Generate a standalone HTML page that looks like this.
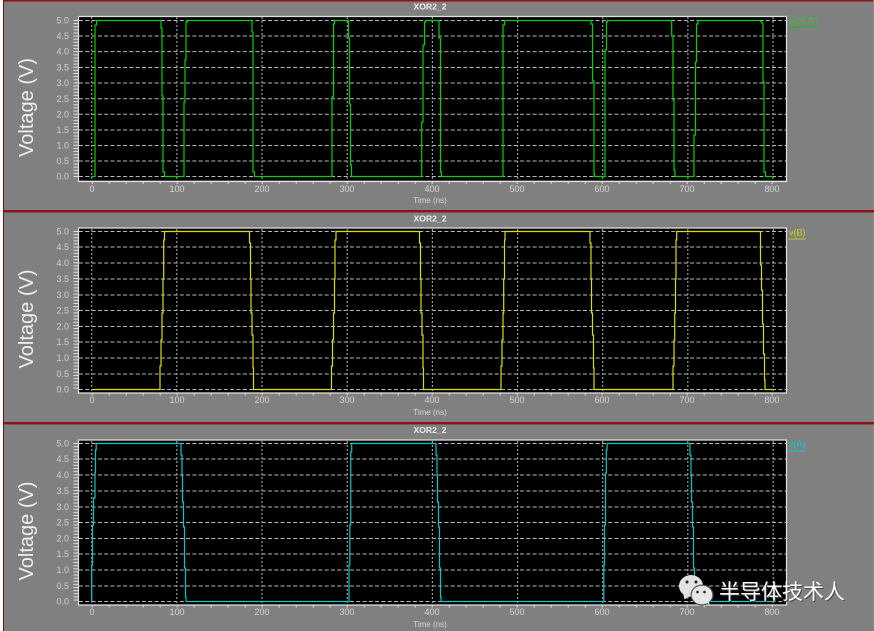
<!DOCTYPE html>
<html>
<head>
<meta charset="utf-8">
<style>
html,body{margin:0;padding:0;width:874px;height:631px;overflow:hidden;background:#808080}
svg{display:block}
text{font-family:"Liberation Sans",sans-serif}
.n{font-size:9px;fill:#d0d0d0}
.nm{font-size:9px;fill:#d4d4d4;text-anchor:middle}
.t{font-size:8.6px;font-weight:bold;fill:#eee;text-anchor:middle}
.x{font-size:8px;fill:#d8d8d8;text-anchor:middle}
.v{font-size:20px;fill:#f0f0f0;text-anchor:middle}
.g{stroke:#b8b8b8;stroke-width:1;fill:none;stroke-dasharray:4 2.3}
.d{stroke:#9a9a9a;stroke-width:1.2;fill:none;stroke-dasharray:2 2}
.w{fill:none;stroke-width:1.2;stroke-linejoin:miter}
.tk{stroke:#e0e0e0;fill:none}
.wm{font-family:"Liberation Sans","Noto Sans CJK SC",sans-serif;font-size:21px;fill:#fff}
</style>
</head>
<body>
<svg width="874" height="631" viewBox="0 0 874 631" xmlns="http://www.w3.org/2000/svg">
<rect width="874" height="631" fill="#808080"/>
<rect x="0" y="0" width="3" height="631" fill="#fff"/>
<rect x="3" y="0" width="1" height="631" fill="#7a1010"/>
<rect x="3" y="0" width="871" height="1.5" fill="#8b1414"/>
<rect x="873" y="0" width="1" height="631" fill="#8c8c8c"/>
<rect x="4" y="210" width="870" height="2.4" fill="#8b1414"/>
<rect x="4" y="422" width="870" height="2.4" fill="#8b1414"/>

<!-- Panel 1 -->
<rect x="79" y="16.5" width="707" height="164" fill="#000"/>
<path d="M78.5 181.5V16.5H786.5V181.5Z" fill="none" stroke="#e0e0e0" stroke-width="1.2"/>
<path class="g" d="M79 20.5H786M79 36H786M79 51.6H786M79 67.5H786M79 83H786M79 98.8H786M79 114.3H786M79 130H786M79 145.5H786M79 161H786M79 176.5H786"/>
<path class="d" d="M91.7 17V181M176.9 17V181M262 17V181M347.2 17V181M432.4 17V181M517.6 17V181M602.7 17V181M687.9 17V181M773 17V181"/>
<path class="tk" stroke-width="5" stroke-dasharray="1 2.12" d="M76 20V178"/>
<path class="tk" stroke-width="2" stroke-dasharray="1 16" d="M91.7 183H787"/>
<path class="w" stroke="#00d200" d="M92 176.5H95V25H96.5V20.5H161V28H162V96H163V172H164.5V176.5H184V102H185V60H186V22H187.5V20.5H252V32H253V172H254.5V176.5H332V97H333.5V24H334.5V20.5H348.5V38H349.5V104H350.5V165H351.5V176.5H421.7V122H423V45H424.5V22H425.5V20.5H439V38H440.5V172H441.5V176.5H503V25H504.5V20.5H591V24H592.5V81H594V174H594.5V176.5H605V50H606.5V22H607.5V20.5H671.7V36H673V100H674V170H675V176.5H694V135H695.5V62H696.5V24H698V20.5H760L763 24V82H764V172H765.5V176.5H773"/>
<text class="t" x="430" y="9.5">XOR2_2</text>
<g class="n" text-anchor="end">
<text x="69" y="23.5">5.0</text><text x="69" y="39">4.5</text><text x="69" y="54.7">4.0</text><text x="69" y="70.5">3.5</text><text x="69" y="86">3.0</text><text x="69" y="101.8">2.5</text><text x="69" y="117.3">2.0</text><text x="69" y="133">1.5</text><text x="69" y="148.5">1.0</text><text x="69" y="164">0.5</text><text x="69" y="179.5">0.0</text>
</g>
<g>
<text class="nm" x="92" y="192">0</text><text class="nm" x="177" y="192">100</text><text class="nm" x="262" y="192">200</text><text class="nm" x="347" y="192">300</text><text class="nm" x="432" y="192">400</text><text class="nm" x="517" y="192">500</text><text class="nm" x="602" y="192">600</text><text class="nm" x="687" y="192">700</text><text class="nm" x="772" y="192">800</text>
</g>
<text class="x" x="430" y="203">Time (ns)</text>
<text class="v" transform="translate(33 107.5) rotate(-90)">Voltage (V)</text>
<text x="789" y="24" font-size="9" fill="#30c830">v(OUT)</text>
<rect x="788.5" y="26.5" width="27.5" height="1" fill="#10c010"/>

<!-- Panel 2 -->
<rect x="79" y="228.5" width="707" height="164" fill="#000"/>
<path d="M78.5 393V228H786.5V393Z" fill="none" stroke="#e0e0e0" stroke-width="1.2"/>
<path class="g" d="M79 231.5H786M79 247H786M79 263H786M79 279H786M79 295H786M79 310.5H786M79 326.5H786M79 342H786M79 358H786M79 374H786M79 389.5H786"/>
<path class="d" d="M91.7 229V392M176.8 229V392M262 229V392M347.2 229V392M432.4 229V392M517.6 229V392M602.7 229V392M687.8 229V392M773.2 229V392"/>
<path class="tk" stroke-width="5" stroke-dasharray="1 2.13" d="M76 231V390"/>
<path class="tk" stroke-width="2" stroke-dasharray="1 16" d="M91.7 394.5H787"/>
<path class="w" stroke="#dcdc00" d="M92 389.5H160V366H161V340H162V313H163V279H163.7V240H164.5V231.5H249.5V243H250.5V279H251V313H252V335H253V368H253.5V389.5H331.5V366H332.5V340H333.5V313H334.5V279H335V240H336V231.5H419.5V243H420.5V279H421V313H422V335H423V368H423.5V389.5H501V366H502V340H503V313H503.7V279H504.5V240H505V231.5H590V243H591V279H591.5V313H592.5V335H593.5V368H594V389.5H673V366H674V340H674.7V313H675.5V279H676V240H676.7V231.5H760L760.5 232V265H761.5V290H762.5V324H763.5V354H764.5V380H765V389.5H773"/>
<text class="t" x="430" y="221.5">XOR2_2</text>
<g class="n" text-anchor="end">
<text x="69" y="234.5">5.0</text><text x="69" y="250">4.5</text><text x="69" y="266">4.0</text><text x="69" y="282">3.5</text><text x="69" y="298">3.0</text><text x="69" y="313.5">2.5</text><text x="69" y="329.5">2.0</text><text x="69" y="345">1.5</text><text x="69" y="361">1.0</text><text x="69" y="377">0.5</text><text x="69" y="392.5">0.0</text>
</g>
<g>
<text class="nm" x="92" y="403">0</text><text class="nm" x="177" y="403">100</text><text class="nm" x="262" y="403">200</text><text class="nm" x="347" y="403">300</text><text class="nm" x="432" y="403">400</text><text class="nm" x="517" y="403">500</text><text class="nm" x="602" y="403">600</text><text class="nm" x="687" y="403">700</text><text class="nm" x="772" y="403">800</text>
</g>
<text class="x" x="430" y="415">Time (ns)</text>
<text class="v" transform="translate(33 319) rotate(-90)">Voltage (V)</text>
<text x="789" y="235.5" font-size="9" fill="#d0d020">v(B)</text>
<rect x="788.5" y="238.5" width="17" height="1" fill="#c8c820"/>

<!-- Panel 3 -->
<rect x="79" y="440" width="707" height="165" fill="#000"/>
<path d="M78.5 605V440H786.5V605Z" fill="none" stroke="#e0e0e0" stroke-width="1.2"/>
<path class="g" d="M79 443.5H786M79 459H786M79 475H786M79 491H786M79 507H786M79 522.5H786M79 538.5H786M79 554H786M79 570H786M79 586H786M79 601.5H786"/>
<path class="d" d="M91.7 441V605M176.8 441V605M262 441V605M347.2 441V605M432.4 441V605M517.6 441V605M602.7 441V605M687.8 441V605M773.2 441V605"/>
<path class="tk" stroke-width="5" stroke-dasharray="1 2.13" d="M76 443V602"/>
<path class="tk" stroke-width="2" stroke-dasharray="1 16" d="M91.7 606.5H787"/>
<path class="w" stroke="#00c8c8" d="M91.7 601.5V565H92.5V525H93.5V498H95V473H95.5V450H96.2V443.5H181V455H182V476H182.5V502H183.5V527H184.5V568H185.5V597H186V601.5H349V565H349.8V525H350.7V452H351.7V443.5H436V455H437V476H437.5V502H438.5V527H439.5V568H440.5V597H441V601.5H603.8V565H604.5V525H605.5V473H606.3V450H607V443.5H689.5L690 444V455H691V476H691.5V502H692.5V527H693.5V568H694.5V597H695V601.5H773"/>
<text class="t" x="430" y="433">XOR2_2</text>
<g class="n" text-anchor="end">
<text x="69" y="446.5">5.0</text><text x="69" y="462">4.5</text><text x="69" y="478">4.0</text><text x="69" y="494">3.5</text><text x="69" y="510">3.0</text><text x="69" y="525.5">2.5</text><text x="69" y="541.5">2.0</text><text x="69" y="557">1.5</text><text x="69" y="573">1.0</text><text x="69" y="589">0.5</text><text x="69" y="604.5">0.0</text>
</g>
<g>
<text class="nm" x="92" y="615">0</text><text class="nm" x="177" y="615">100</text><text class="nm" x="262" y="615">200</text><text class="nm" x="347" y="615">300</text><text class="nm" x="432" y="615">400</text><text class="nm" x="517" y="615">500</text><text class="nm" x="602" y="615">600</text><text class="nm" x="687" y="615">700</text><text class="nm" x="772" y="615">800</text>
</g>
<text class="x" x="430" y="627">Time (ns)</text>
<text class="v" transform="translate(33 531) rotate(-90)">Voltage (V)</text>
<text x="789" y="447" font-size="9" fill="#00d0d0">v(A)</text>
<rect x="788.5" y="450.5" width="17" height="1" fill="#00d0d0"/>

<!-- WeChat watermark -->
<g>
<ellipse cx="691" cy="586" rx="12" ry="11" fill="#e2e2e2"/>
<path d="M683 593L684.5 599.5L691 595Z" fill="#e2e2e2"/>
<circle cx="687" cy="582" r="1.5" fill="#222"/>
<circle cx="696" cy="582" r="1.5" fill="#222"/>
<ellipse cx="702" cy="595" rx="11.5" ry="10.5" fill="#555"/>
<ellipse cx="702" cy="595" rx="10.3" ry="9.3" fill="#e6e6e6"/>
<path d="M706 602L710 605L708 600Z" fill="#e6e6e6"/>
<circle cx="697.5" cy="592" r="1.3" fill="#222"/>
<circle cx="704.5" cy="592" r="1.3" fill="#222"/>
</g>
<text class="wm" x="720" y="600" style="fill:#444">半导体技术人</text>
<text class="wm" x="719" y="599">半导体技术人</text>
</svg>
</body>
</html>
